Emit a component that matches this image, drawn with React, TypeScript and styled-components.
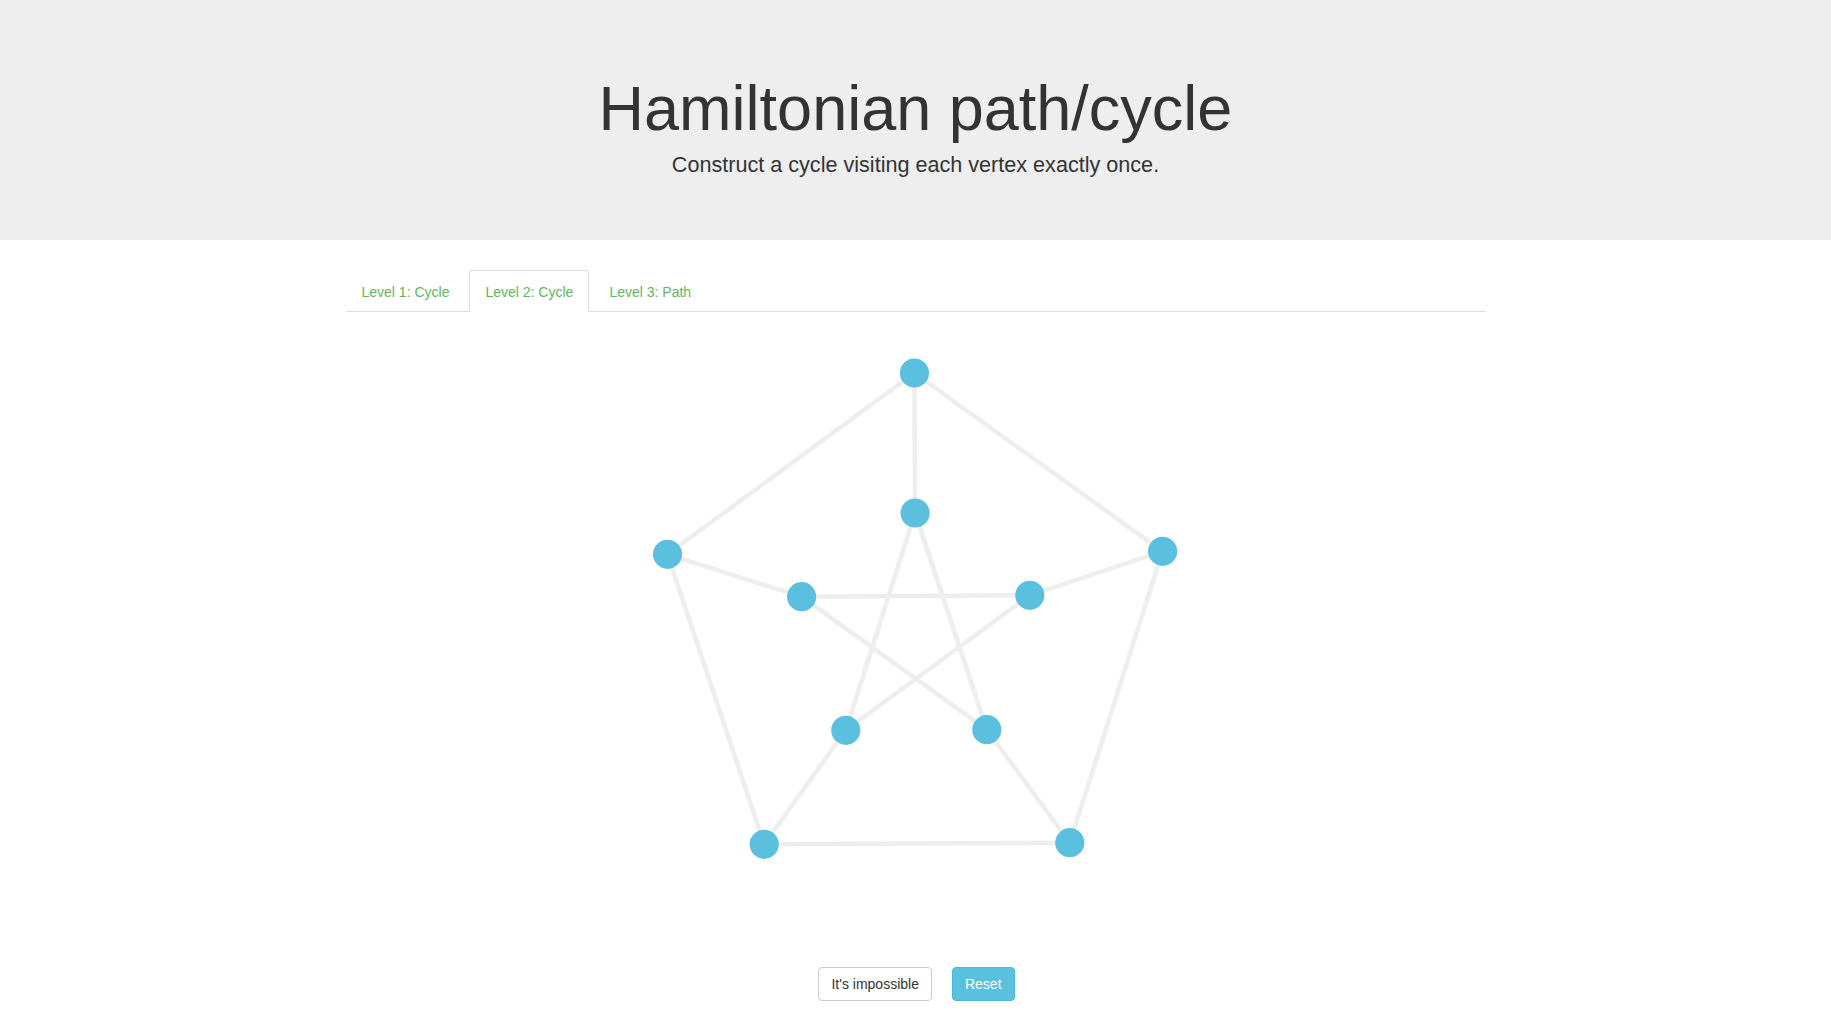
import { useState } from "react";
import styled, { createGlobalStyle } from "styled-components";

const GlobalStyle = createGlobalStyle`
   * { box-sizing: border-box; }
   body {
      margin: 0;
      font-family: "Liberation Sans", Arial, Helvetica, sans-serif;
      font-size: 14px;
      line-height: 1.42857;
      color: #333;
      background: #fff;
   }
`;

type Node = { id: string; x: number; y: number };

const nodes: Node[] = [
   { id: "top", x: 568.4, y: 41 },
   { id: "lo", x: 321.5, y: 222.3 },
   { id: "ro", x: 816.6, y: 219.3 },
   { id: "bl", x: 418.2, y: 512.3 },
   { id: "br", x: 723.8, y: 510.7 },
   { id: "it", x: 569.1, y: 181 },
   { id: "il", x: 455.6, y: 264.7 },
   { id: "ir", x: 683.8, y: 263.3 },
   { id: "ibl", x: 499.8, y: 398.3 },
   { id: "ibr", x: 640.8, y: 397.7 },
];

const edges: [string, string][] = [
   ["top", "lo"],
   ["top", "ro"],
   ["lo", "bl"],
   ["ro", "br"],
   ["bl", "br"],
   ["top", "it"],
   ["lo", "il"],
   ["ro", "ir"],
   ["bl", "ibl"],
   ["br", "ibr"],
   ["it", "ibl"],
   ["it", "ibr"],
   ["il", "ir"],
   ["il", "ibr"],
   ["ir", "ibl"],
];

const levels = ["Level 1: Cycle", "Level 2: Cycle", "Level 3: Path"];

const App = () => {
   const [active, setActive] = useState<number>(1);
   const byId = (id: string) => nodes.find((n) => n.id === id)!;

   return (
      <>
         <GlobalStyle />
         <Jumbotron>
            <Title>Hamiltonian path/cycle</Title>
            <Lead>Construct a cycle visiting each vertex exactly once.</Lead>
         </Jumbotron>

         <Container>
            <Tabs>
               {levels.map((level, index) => (
                  <Tab key={level} $active={active === index} onClick={() => setActive(index)}>
                     {level}
                  </Tab>
               ))}
            </Tabs>

            <Graph width={1140} height={610} viewBox="0 0 1140 610">
               {edges.map(([a, b]) => {
                  const na = byId(a);
                  const nb = byId(b);
                  return (
                     <line
                        key={a + b}
                        x1={na.x}
                        y1={na.y}
                        x2={nb.x}
                        y2={nb.y}
                        stroke="#eeeeee"
                        strokeWidth={4.5}
                     />
                  );
               })}
               {nodes.map((n) => (
                  <circle key={n.id} cx={n.x} cy={n.y} r={14.6} fill="#5bc0de" />
               ))}
            </Graph>

            <Actions>
               <Button>It's impossible</Button>
               <Button $info>Reset</Button>
            </Actions>
         </Container>
      </>
   );
};

const Jumbotron = styled.header`
   background: #eeeeee;
   padding: 74px 15px 60px;
   margin-bottom: 30px;
   text-align: center;
`;

const Title = styled.h1`
   margin: 0 0 7px;
   font-size: 63px;
   font-weight: 400;
   line-height: 1.1;
   color: #333;
`;

const Lead = styled.p`
   margin: 0;
   font-size: 21.6px;
   line-height: 30px;
   font-weight: 400;
`;

const Container = styled.main`
   width: 1140px;
   margin: 0 auto;
`;

const Tabs = styled.nav`
   display: flex;
   border-bottom: 1px solid #ddd;
`;

const Tab = styled.a<{ $active?: boolean }>`
   display: block;
   margin-right: 4px;
   margin-bottom: -1px;
   padding: 11px 15px 9px;
   line-height: 20px;
   font-size: 14px;
   color: #5cb85c;
   cursor: pointer;
   border: 1px solid ${(p) => (p.$active ? "#ddd" : "transparent")};
   border-bottom-color: transparent;
   border-radius: 4px 4px 0 0;
   background: ${(p) => (p.$active ? "#fff" : "transparent")};
`;

const Graph = styled.svg`
   display: block;
   margin-top: 20px;
`;

const Actions = styled.div`
   display: flex;
   justify-content: center;
   gap: 20px;
   margin-top: 25px;
   padding: 0 0 20px 2px;
`;

const Button = styled.button<{ $info?: boolean }>`
   padding: 6px 12px;
   font-family: inherit;
   font-size: 14px;
   line-height: 20px;
   border-radius: 4px;
   cursor: pointer;
   color: ${(p) => (p.$info ? "#fff" : "#333")};
   background: ${(p) => (p.$info ? "#5bc0de" : "#fff")};
   border: 1px solid ${(p) => (p.$info ? "#46b8da" : "#ccc")};
`;

export default App;
